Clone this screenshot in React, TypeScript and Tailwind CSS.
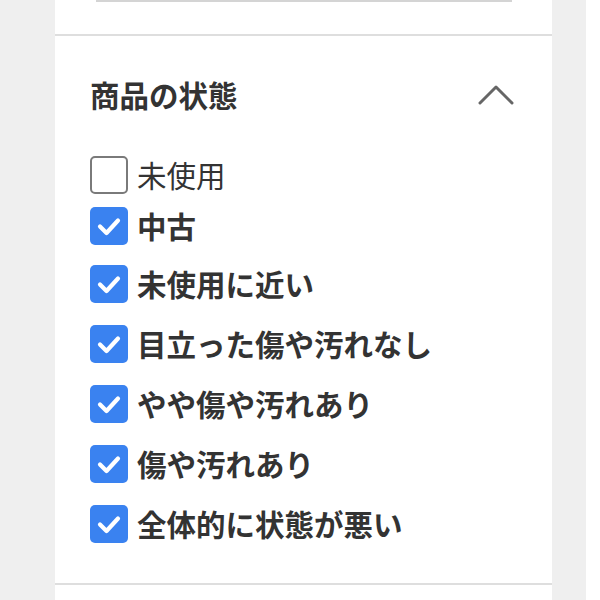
const items = [
  { label: '未使用', checked: false, h: 'h-[51px]' },
  { label: '中古', checked: true, h: 'h-[58px]' },
  { label: '未使用に近い', checked: true, h: 'h-[60px]' },
  { label: '目立った傷や汚れなし', checked: true, h: 'h-[60px]' },
  { label: 'やや傷や汚れあり', checked: true, h: 'h-[60px]' },
  { label: '傷や汚れあり', checked: true, h: 'h-[60px]' },
  { label: '全体的に状態が悪い', checked: true, h: 'h-[60px]' },
];

function Box({ checked }: { checked: boolean }) {
  if (!checked) {
    return <span className="block w-[38px] h-[38px] shrink-0 rounded-[5px] border-2 border-[#7a7a7a] bg-white" />;
  }
  return (
    <span className="flex items-center justify-center w-[38px] h-[38px] shrink-0 rounded-[5px] bg-[#3a82f0]">
      <svg width="38" height="38" viewBox="0 0 38 38" fill="none">
        <path d="M10 19.5 L16.5 26 L28 13.5" stroke="#fff" strokeWidth="4.2" strokeLinecap="round" strokeLinejoin="round" />
      </svg>
    </span>
  );
}

export default function App() {
  return (
    <div
      className="flex w-[600px] h-[600px] overflow-hidden bg-white"
      style={{ fontFamily: '"Noto Sans CJK JP", "Noto Sans", sans-serif' }}
    >
      <div className="w-[55px] shrink-0 bg-[#efefef]" />
      <div className="w-[497px] shrink-0 flex flex-col bg-white">
        <div className="h-[34px] shrink-0">
          <div className="ml-[41px] w-[416px] h-[2px] bg-[#d4d4d4]" />
        </div>
        <div className="h-[2px] bg-[#dedede]" />
        <div className="flex items-center justify-between pl-[35px] pr-[38px] h-[117px]">
          <h2 className="text-[29.5px] font-bold text-[#333] leading-none">商品の状態</h2>
          <svg width="36" height="22" viewBox="0 0 36 22" fill="none">
            <path d="M2 19 L18 3 L34 19" stroke="#666" strokeWidth="3" strokeLinecap="round" strokeLinejoin="round" />
          </svg>
        </div>
        <div className="flex flex-col pl-[35px] mt-[3px]">
          {items.map((it) => (
            <div key={it.label} className={`flex items-start gap-[9px] ${it.h}`}>
              <Box checked={it.checked} />
              <span
                className={`text-[29.5px] leading-[37px] text-[#333] ${it.checked ? 'font-bold' : 'font-normal'}`}
              >
                {it.label}
              </span>
            </div>
          ))}
        </div>
        <div className="mt-[18px] h-[2px] bg-[#dedede]" />
      </div>
      <div className="w-[34px] shrink-0 bg-[#efefef]" />
      <div className="flex-1 bg-white" />
    </div>
  );
}
